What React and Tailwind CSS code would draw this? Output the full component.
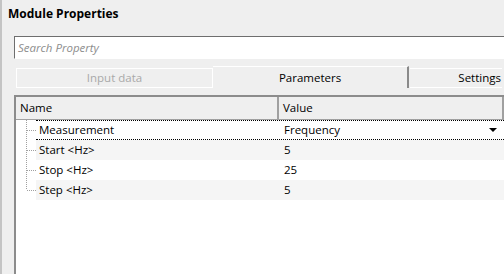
import React from "react";

const rows = [
  { name: "Measurement", value: "Frequency", selected: true },
  { name: "Start <Hz>", value: "5" },
  { name: "Stop <Hz>", value: "25" },
  { name: "Step <Hz>", value: "5", last: true },
];

function TreeLines({ last }) {
  return (
    <svg width="20" height="20" className="shrink-0">
      <line x1="10.5" y1="0" x2="10.5" y2={last ? 10 : 20} stroke="#a0a0a0" strokeDasharray="1 1" />
      <line x1="11" y1="10.5" x2="20" y2="10.5" stroke="#a0a0a0" strokeDasharray="1 1" />
    </svg>
  );
}

export default function App() {
  return (
    <div
      className="w-[504px] h-[274px] overflow-hidden bg-[#efefef] border-l-2 border-[#c4c4c4] text-[11.5px] text-black"
      style={{ fontFamily: '"Segoe UI", "Open Sans", sans-serif' }}
    >
      <div className="h-[30px] pl-[6px] pt-[5px] font-bold text-[12px] leading-[18px]">Module Properties</div>

      <div className="pl-[12px]">
        {/* search */}
        <div className="mt-[6px] h-[23px] bg-white border-t border-l border-[#6e6e6e] border-b border-b-white flex items-center pl-[3px]">
          <span className="italic text-[#8d8d8d]">Search Property</span>
        </div>

        {/* tabs */}
        <div className="mt-[7px] h-[22px] flex whitespace-nowrap">
          <div className="ml-[2px] mt-[2px] h-[20px] w-[197px] shrink-0 border border-white flex items-center justify-center text-[#a9a9a9]">
            Input data
          </div>
          <div className="h-[22px] w-[196px] shrink-0 border-t border-white border-r-2 border-r-[#8a8a8a] flex items-center justify-center">
            Parameters
          </div>
          <div className="ml-[1px] mt-[2px] h-[20px] w-[92px] shrink-0 border-t border-b border-white flex items-center justify-end pr-[1px]">
            Settings
          </div>
        </div>

        {/* table */}
        <div className="mt-[7px] h-[200px] bg-white border-t-2 border-l-2 border-[#8c8c8c]">
          <div className="h-[23px] flex bg-[#efefef]">
            <div className="w-[263px] shrink-0 border-r-2 border-b border-r-[#a0a0a0] border-b-[#a0a0a0] flex items-center pl-[4px]">
              Name
            </div>
            <div className="flex-1 border-r-2 border-b border-[#a0a0a0] flex items-center pl-[4px]">Value</div>
          </div>
          {rows.map((r, i) => (
            <div key={r.name} className="h-[20px] flex">
              <TreeLines last={r.last} />
              <div
                className={`flex-1 flex items-center ${i % 2 === 1 ? "bg-[#f5f5f5]" : "bg-white"} ${
                  r.selected ? "border-y border-dotted border-black" : ""
                }`}
              >
                <div className="w-[243px] shrink-0 pl-[3px]">{r.name}</div>
                <div className="flex-1 flex items-center justify-between pl-[5px] pr-[7px]">
                  <span>{r.value}</span>
                  {r.selected && (
                    <svg width="8" height="5">
                      <polygon points="0,0 8,0 4,4" fill="#000" />
                    </svg>
                  )}
                </div>
              </div>
            </div>
          ))}
        </div>
      </div>
    </div>
  );
}
